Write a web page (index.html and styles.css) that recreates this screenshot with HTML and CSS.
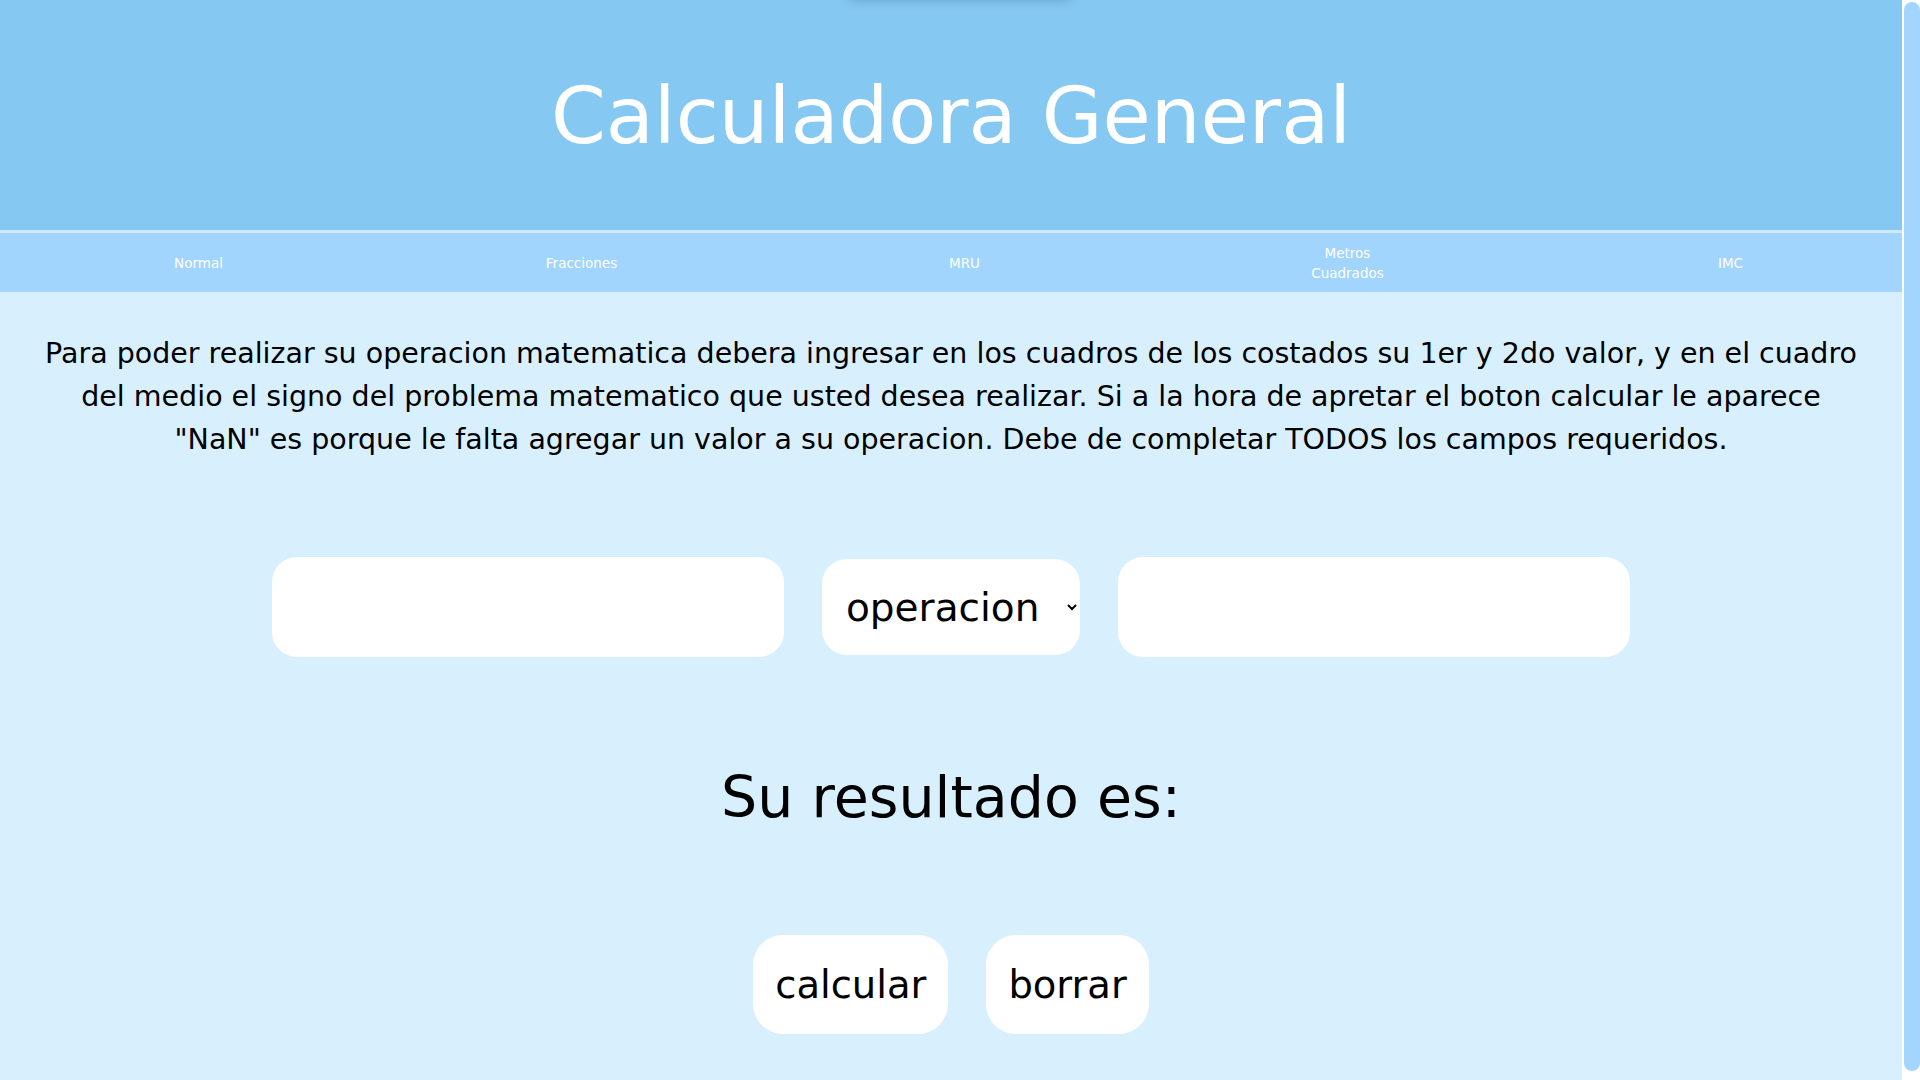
FILE: index.html
```html
<!DOCTYPE html>
<html lang="es">
<head>
<meta charset="utf-8">
<title>Calculadora General</title>
<link rel="stylesheet" href="styles.css">
</head>
<body>
<div class="page">
  <div class="top-shadow"></div>
  <header class="header">
    <h1 class="title">Calculadora General</h1>
  </header>
  <nav class="nav">
    <a class="nav-link" href="#">Normal</a>
    <a class="nav-link" href="#">Fracciones</a>
    <a class="nav-link" href="#">MRU</a>
    <a class="nav-link nav-link-wrap" href="#">Metros Cuadrados</a>
    <a class="nav-link" href="#">IMC</a>
  </nav>
  <main class="main">
    <p class="intro">Para poder realizar su operacion matematica debera ingresar en los cuadros de los costados su 1er y 2do valor, y en el cuadro del medio el signo del problema matematico que usted desea realizar. Si a la hora de apretar el boton calcular le aparece "NaN" es porque le falta agregar un valor a su operacion. Debe de completar TODOS los campos requeridos.</p>
    <div class="inputs">
      <input class="field" type="text">
      <select class="op">
        <option>operacion</option>
        <option>+</option>
        <option>-</option>
        <option>*</option>
        <option>/</option>
      </select>
      <input class="field" type="text">
    </div>
    <h2 class="result">Su resultado es:</h2>
    <div class="buttons">
      <button class="btn">calcular</button>
      <button class="btn">borrar</button>
    </div>
  </main>
</div>
<div class="scrollbar"><div class="scrollbar-thumb"></div></div>
</body>
</html>
```
FILE: styles.css
```css
html { background: #ffffff; }
body {
  margin: 0;
  background: #ffffff;
  font-family: "DejaVu Sans", "Noto Sans", sans-serif;
  color: #000;
}
.page {
  position: relative;
  margin-right: 18px;
  background: #d8effd;
  overflow: hidden;
}
.scrollbar {
  position: fixed;
  top: 0;
  right: 0;
  width: 18px;
  height: 100vh;
  background: #ffffff;
  box-sizing: border-box;
  padding: 2px 0 9px 2px;
  display: flex;
}
.scrollbar-thumb {
  flex: 1;
  background: #a3d5fe;
  border-radius: 8px;
}
.top-shadow {
  position: absolute;
  top: -40px;
  left: 850px;
  width: 220px;
  height: 40px;
  box-shadow: 0 0 10px rgba(40, 90, 140, 0.35);
  background: #85c8f2;
}
.header {
  box-sizing: border-box;
  height: 230px;
  background: #85c8f2;
  padding-top: 77px;
  text-align: center;
}
.title {
  margin: 0;
  font-size: 78.5px;
  line-height: 78px;
  font-weight: normal;
  color: #ffffff;
}
.nav {
  box-sizing: border-box;
  height: 62px;
  border-top: 3px solid #cfeafd;
  background: #a2d5fe;
  display: grid;
  grid-template-columns: repeat(5, 383px);
  padding-left: 7px;
  align-items: center;
  justify-items: center;
  overflow: hidden;
}
.nav-link {
  color: #ffffff;
  text-decoration: none;
  font-size: 13.5px;
  line-height: 20px;
  text-align: center;
}
.nav-link-wrap { max-width: 90px; }
.main {
  padding: 40px 40px 56px;
  text-align: center;
}
.intro {
  margin: 0;
  font-size: 28.5px;
  line-height: 43px;
}
.inputs {
  margin-top: 96px;
  display: flex;
  justify-content: center;
  align-items: center;
  gap: 38px;
}
.field {
  box-sizing: border-box;
  width: 512px;
  height: 100px;
  border: none;
  border-radius: 25px;
  background: #ffffff;
  outline: none;
  font-size: 30px;
  padding: 0 20px;
}
.op {
  box-sizing: border-box;
  width: 258px;
  height: 96px;
  border: none;
  border-radius: 25px;
  background: #ffffff;
  font-family: "DejaVu Sans", sans-serif;
  font-size: 39px;
  color: #000;
  padding: 0 4px 0 20px;
  outline: none;
}
.result {
  margin: 105px 0 0;
  font-size: 57px;
  line-height: 70px;
  font-weight: normal;
}
.buttons {
  margin-top: 103px;
  display: flex;
  justify-content: center;
  gap: 38px;
}
.btn {
  height: 99px;
  padding: 0 22px;
  border: none;
  border-radius: 30px;
  background: #ffffff;
  font-family: "DejaVu Sans", sans-serif;
  font-size: 38.5px;
  color: #000;
}
```
